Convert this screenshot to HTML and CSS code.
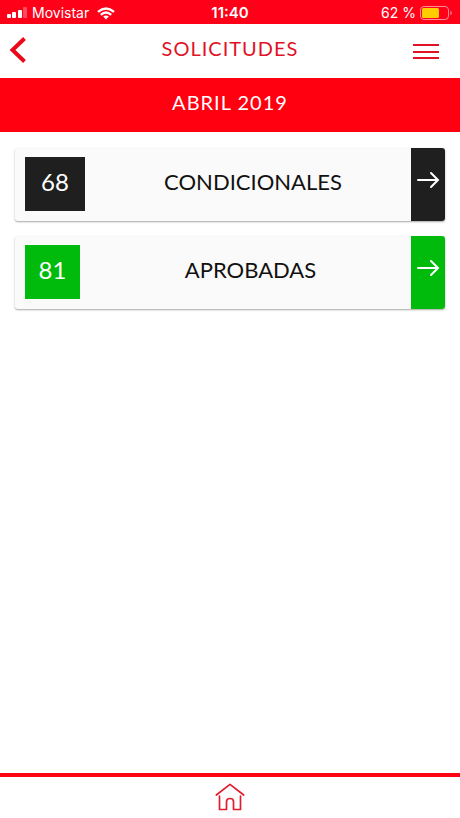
FILE: index.html
```html
<!DOCTYPE html>
<html lang="es">
<head>
<meta charset="utf-8">
<meta name="viewport" content="width=device-width, initial-scale=1">
<title>Solicitudes</title>
<link rel="stylesheet" href="styles.css">
</head>
<body>
<div class="status">
  <div class="status-side">
    <svg width="21" height="12" viewBox="0 0 21 12" fill="#fff" aria-hidden="true">
      <rect x="0" y="7" width="4" height="4" rx="1"/>
      <rect x="5" y="5" width="4" height="6" rx="1"/>
      <rect x="11" y="3" width="4" height="8" rx="1"/>
      <rect x="16" y="0" width="4" height="11" rx="1" opacity=".3"/>
    </svg>
    <span class="carrier">Movistar</span>
    <svg width="18" height="13" viewBox="0 0 18 13" fill="none" stroke="#fff" stroke-width="2.4" aria-hidden="true">
      <path d="M1 4.8Q9-2 17 4.8M3.8 7.8Q9 3.4 14.2 7.8"/>
      <path d="M6.2 9.6Q9 7.6 11.8 9.6L9 12.6Z" fill="#fff" stroke="none"/>
    </svg>
  </div>
  <span class="time">11:40</span>
  <div class="status-side status-right">
    <span>62 %</span>
    <svg width="33" height="14" viewBox="0 0 33 14" aria-hidden="true">
      <rect x=".5" y=".5" width="28" height="13" rx="3.5" fill="none" stroke="#fff" stroke-opacity=".55"/>
      <rect x="2" y="2" width="17" height="10" rx="1.5" fill="#ffcc00"/>
      <path d="M30.5 4.5Q33 7 30.5 9.5Z" fill="#fff" opacity=".6"/>
    </svg>
  </div>
</div>
<header class="topbar">
  <button class="icon-button" type="button" aria-label="Volver">
    <svg width="18" height="26" viewBox="0 0 18 26" fill="none" stroke="#e9091b" stroke-width="4"><path d="M15.5 1.5L3.5 13L15.5 24.5"/></svg>
  </button>
  <h1>SOLICITUDES</h1>
  <button class="icon-button menu-button" type="button" aria-label="Menú">
    <svg width="26" height="16" viewBox="0 0 26 16" fill="#e01226"><path d="M0 0h26v2H0zM0 7h26v2H0zM0 13h26v2H0z"/></svg>
  </button>
</header>
<h2 class="period">ABRIL 2019</h2>
<main class="list">
  <a class="card card-dark" href="#condicionales">
    <span class="count">68</span>
    <span class="label">CONDICIONALES</span>
    <span class="go"><svg width="24" height="18" viewBox="0 0 24 18" fill="none" stroke="#fff" stroke-width="2" stroke-linecap="round" aria-hidden="true"><path d="M2 9H22M15 2L22 9L15 16"/></svg></span>
  </a>
  <a class="card card-green" href="#aprobadas">
    <span class="count">81</span>
    <span class="label">APROBADAS</span>
    <span class="go"><svg width="24" height="18" viewBox="0 0 24 18" fill="none" stroke="#fff" stroke-width="2" stroke-linecap="round" aria-hidden="true"><path d="M2 9H22M15 2L22 9L15 16"/></svg></span>
  </a>
</main>
<nav class="bottombar">
  <a href="#inicio" aria-label="Inicio">
    <svg width="30" height="28" viewBox="0 0 30 28" fill="none" stroke="#de1f30" stroke-width="1.7" stroke-linecap="round" stroke-linejoin="round"><path d="M1.3 12L15 1.3L28.7 12M4.5 13V26.5H11.5V18.5Q11.5 15.5 15 15.5Q18.5 15.5 18.5 18.5V26.5H25.5V13"/></svg>
  </a>
</nav>
</body>
</html>
```
FILE: styles.css
```css
* {
  box-sizing: border-box;
}

body {
  margin: 0;
  min-height: 100vh;
  display: flex;
  flex-direction: column;
  background: #fff;
  color: #111;
  font-family: Lato, "Open Sans", sans-serif;
}

.status {
  display: grid;
  grid-template-columns: 1fr auto 1fr;
  align-items: center;
  height: 24px;
  padding: 2px 7px 0;
  background: #ff0019;
  color: #fff;
  font: 14px/20px Inter, sans-serif;
}

.status-side {
  display: flex;
  align-items: center;
  gap: 4px;
}

.carrier {
  margin-right: 4px;
}

.status-right {
  justify-content: flex-end;
}

.time {
  font-size: 15px;
  font-weight: 600;
}

.topbar {
  display: grid;
  grid-template-columns: 1fr auto 1fr;
  align-items: center;
  height: 54px;
  padding: 0 9px 2px;
}

h1,
h2 {
  margin: 0;
  font-size: 20px;
  font-weight: 400;
  line-height: 24px;
  letter-spacing: 1px;
}

h1 {
  padding-bottom: 4px;
  color: #e01226;
}

.icon-button {
  display: flex;
  padding: 0;
  border: 0;
  background: none;
  cursor: pointer;
}

.menu-button {
  justify-self: end;
  padding: 3px 12px 0 0;
}

.period {
  padding: 12px 0 18px;
  background: #ff0010;
  color: #fff;
  text-align: center;
}

.list {
  flex: 1;
  display: flex;
  flex-direction: column;
  gap: 15px;
  padding: 16px 15px;
}

.card {
  display: flex;
  min-height: 73px;
  border-radius: 3px;
  overflow: hidden;
  background: #fafafa;
  color: inherit;
  text-decoration: none;
  box-shadow: 0 1px 2px rgba(0, 0, 0, 0.35);
}

.card-dark {
  --accent: #1f1f1f;
  --count-width: 60px;
}

.card-green {
  --accent: #00bb0c;
  --count-width: 55px;
}

.count,
.label,
.go {
  display: flex;
  align-items: center;
  justify-content: center;
  padding-bottom: 6px;
}

.count {
  width: var(--count-width);
  margin: 9px 10px 10px;
  background: var(--accent);
  color: #fff;
  font-size: 24px;
}

.label {
  flex: 1;
  font-size: 22px;
}

.go {
  width: 34px;
  padding-bottom: 9px;
  background: var(--accent);
}

.bottombar {
  display: flex;
  justify-content: center;
  padding: 6px 0 7px;
  border-top: 4px solid #ff0514;
}

.bottombar a {
  display: flex;
}
```
